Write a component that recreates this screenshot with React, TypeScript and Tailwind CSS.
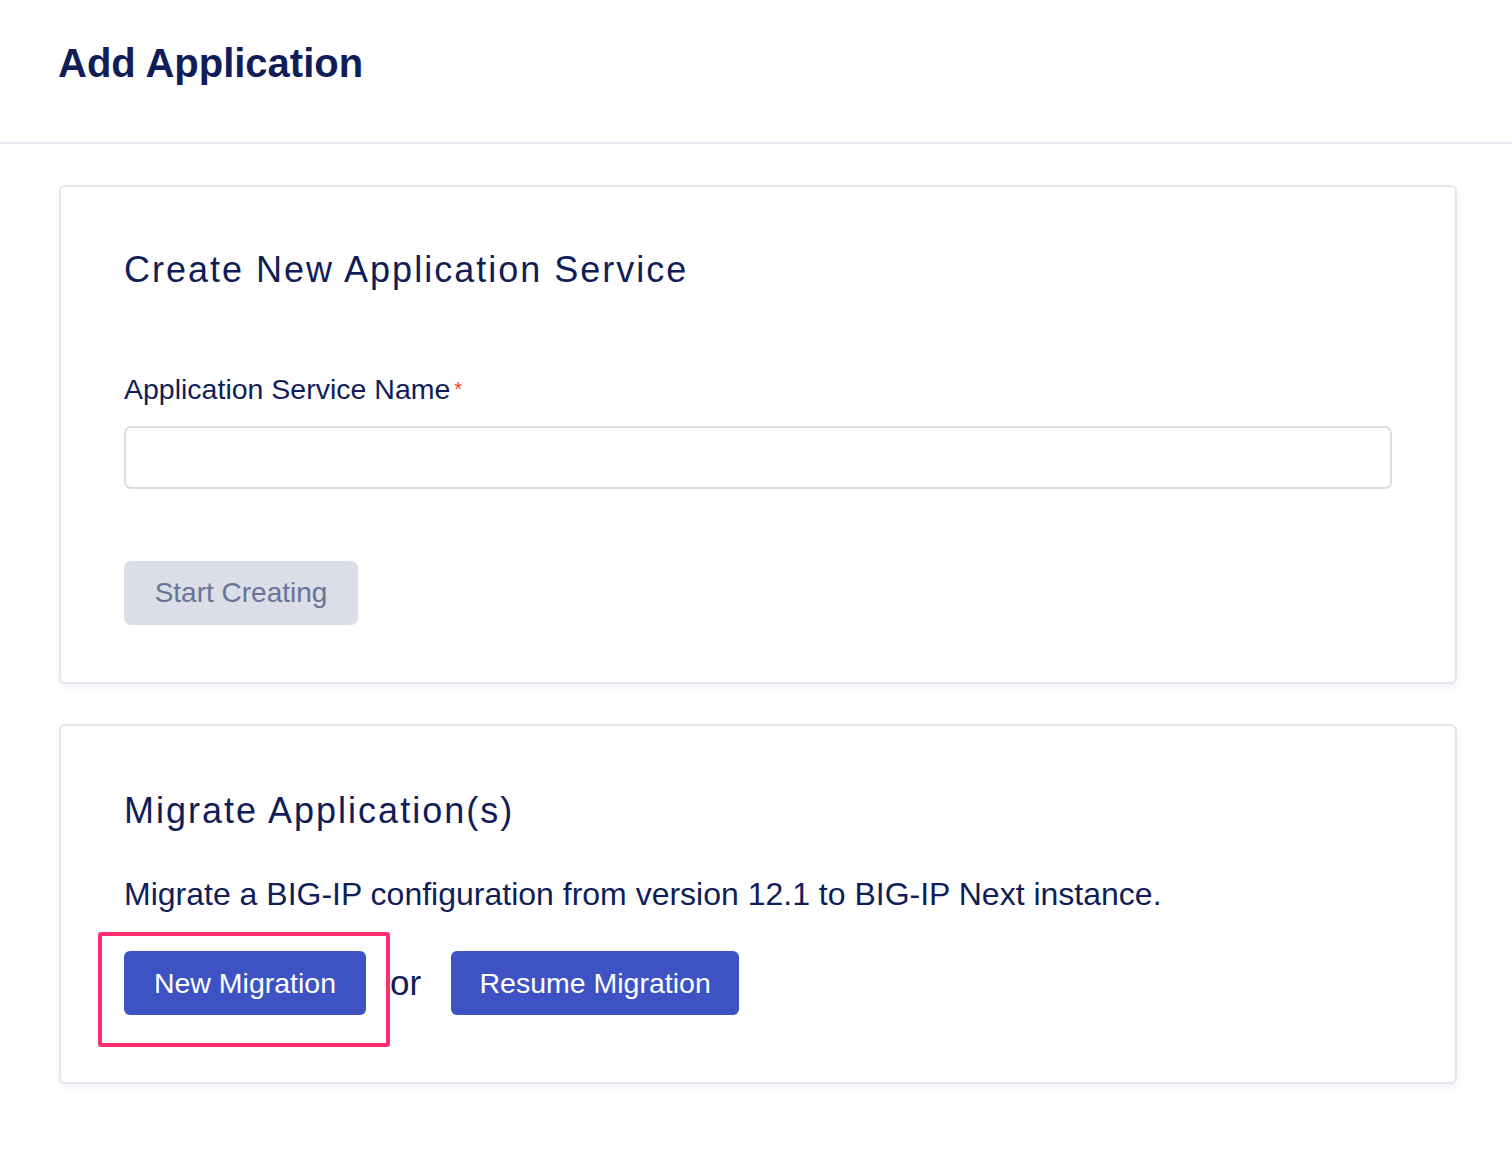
const navy = "text-[#111d58]";

const Card = ({ children, className = "" }: { children: React.ReactNode; className?: string }) => (
  <div
    className={`rounded-[6px] border-2 border-[#e4e5ec] bg-white shadow-[0_3px_6px_rgba(30,40,90,0.06)] ${className}`}
  >
    {children}
  </div>
);

export default function App() {
  return (
    <div className="min-h-[1162px] w-full bg-white font-['Liberation_Sans',Arial,sans-serif]">
      {/* Header */}
      <div className="flex h-[144px] items-start border-b-2 border-[#e8e9f3] pl-[58px] pt-[40px]">
        <h1 className={`text-[40px] font-bold leading-[46px] ${navy}`}>Add Application</h1>
      </div>

      <div className="flex flex-col gap-[40px] pl-[59px] pr-[55px] pt-[41px]">
        {/* Create new */}
        <Card className="h-[499px] px-[63px] pt-[58px]">
          <h2 className={`text-[36px] leading-[50px] tracking-[2px] ${navy}`}>
            Create New Application Service
          </h2>
          <label className={`mt-[77px] block text-[28.5px] leading-[34px] ${navy}`}>
            Application Service Name<span className="ml-[4px] align-top text-[20px] text-[#f0452e]">*</span>
          </label>
          <input
            type="text"
            className="mt-[20px] block h-[63px] w-full rounded-[7px] border-2 border-[#dcdde4] bg-white outline-none"
          />
          <button
            disabled
            className="mt-[72px] h-[64px] w-[234px] rounded-[7px] bg-[#dbdee6] text-[28px] text-[#69739a]"
          >
            Start Creating
          </button>
        </Card>

        {/* Migrate */}
        <Card className="h-[360px] px-[63px] pt-[60px]">
          <h2 className={`text-[36px] leading-[50px] tracking-[2px] ${navy}`}>Migrate Application(s)</h2>
          <p className={`mt-[38px] text-[32px] leading-[40px] ${navy}`}>
            Migrate a BIG-IP configuration from version 12.1 to BIG-IP Next instance.
          </p>
          <div className="mt-[37px] flex items-center">
            <div className="relative">
              <button className="h-[64px] w-[242px] rounded-[6px] bg-[#3d53c4] text-[28.5px] text-white">
                New Migration
              </button>
              <div className="pointer-events-none absolute left-[-26px] top-[-19px] h-[115px] w-[292px] rounded-[3px] border-[4px] border-[#ff2e6f]" />
            </div>
            <span className={`ml-[24px] mr-[30px] text-[35px] ${navy}`}>or</span>
            <button className="h-[64px] w-[288px] rounded-[6px] bg-[#3d53c4] text-[28.5px] text-white">
              Resume Migration
            </button>
          </div>
        </Card>
      </div>
    </div>
  );
}
